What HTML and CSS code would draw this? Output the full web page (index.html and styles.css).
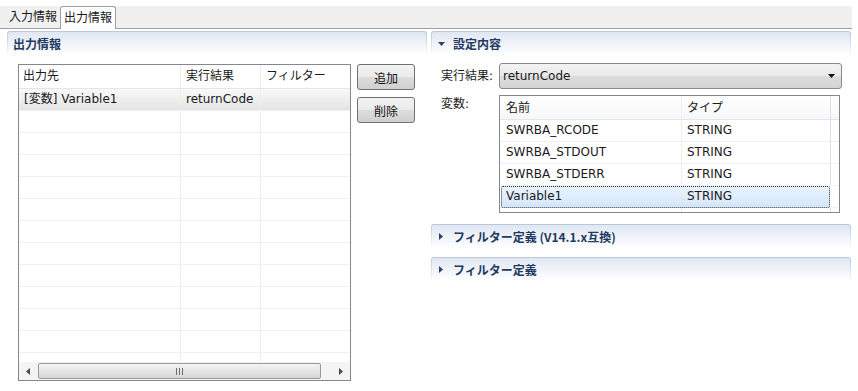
FILE: index.html
```html
<!DOCTYPE html>
<html lang="ja">
<head>
  <meta charset="UTF-8">
  <title>出力情報</title>
  <link rel="stylesheet" href="styles.css">
</head>
<body>

<div class="tabbar">
  <div class="tab">入力情報</div>
  <div class="tab active">出力情報</div>
</div>

<div class="main">
  <!-- 左: 出力情報 -->
  <div class="col">
    <div class="sec-head"><div class="sec-title">出力情報</div></div>
    <div class="left-body">
      <div class="grid">
        <div class="grid-head">
          <div class="cell">出力先</div>
          <div class="cell">実行結果</div>
          <div class="cell">フィルター</div>
        </div>
        <div class="grid-rows">
          <div class="grow sel">
            <div class="cell">[変数] Variable1</div>
            <div class="cell">returnCode</div>
            <div class="cell"></div>
          </div>
          <div class="grow"><div class="cell"></div><div class="cell"></div><div class="cell"></div></div>
          <div class="grow"><div class="cell"></div><div class="cell"></div><div class="cell"></div></div>
          <div class="grow"><div class="cell"></div><div class="cell"></div><div class="cell"></div></div>
          <div class="grow"><div class="cell"></div><div class="cell"></div><div class="cell"></div></div>
          <div class="grow"><div class="cell"></div><div class="cell"></div><div class="cell"></div></div>
          <div class="grow"><div class="cell"></div><div class="cell"></div><div class="cell"></div></div>
          <div class="grow"><div class="cell"></div><div class="cell"></div><div class="cell"></div></div>
          <div class="grow"><div class="cell"></div><div class="cell"></div><div class="cell"></div></div>
          <div class="grow"><div class="cell"></div><div class="cell"></div><div class="cell"></div></div>
          <div class="grow"><div class="cell"></div><div class="cell"></div><div class="cell"></div></div>
          <div class="grow"><div class="cell"></div><div class="cell"></div><div class="cell"></div></div>
          <div class="grow"><div class="cell"></div><div class="cell"></div><div class="cell"></div></div>
        </div>
        <div class="hscroll">
          <div class="sarrow">
            <svg width="4" height="7" viewBox="0 0 4 7"><path d="M4 0 L0 3.5 L4 7 Z" fill="#4a4a4a"/></svg>
          </div>
          <div class="thumb">
            <svg width="7" height="7" viewBox="0 0 7 7"><path d="M0.5 0 V7 M3.5 0 V7 M6.5 0 V7" stroke="#6a6a6a" stroke-width="1"/></svg>
          </div>
          <div class="strack"></div>
          <div class="sarrow">
            <svg width="4" height="7" viewBox="0 0 4 7"><path d="M0 0 L4 3.5 L0 7 Z" fill="#4a4a4a"/></svg>
          </div>
        </div>
      </div>
      <div class="btns">
        <button class="btn">追加</button>
        <button class="btn">削除</button>
      </div>
    </div>
  </div>

  <!-- 右: 設定内容 -->
  <div class="col">
    <div class="sec-head">
      <div class="sec-title">
        <svg class="tri" width="7" height="4" viewBox="0 0 7 4"><path d="M0 0 H7 L3.5 4 Z" fill="#2b4468"/></svg>
        設定内容
      </div>
    </div>
    <div class="form">
      <div class="frow">
        <div class="flabel">実行結果:</div>
        <div class="combo">
          <span>returnCode</span>
          <svg width="7" height="4" viewBox="0 0 7 4"><path d="M0 0 H7 L3.5 4 Z" fill="#111"/></svg>
        </div>
      </div>
      <div class="frow top">
        <div class="flabel lbl-var">変数:</div>
        <div class="vtable">
          <div class="vrow vhead">
            <div class="vcell">名前</div>
            <div class="vcell">タイプ</div>
            <div class="vcell"></div>
          </div>
          <div class="vrow">
            <div class="vcell">SWRBA_RCODE</div>
            <div class="vcell">STRING</div>
            <div class="vcell"></div>
          </div>
          <div class="vrow">
            <div class="vcell">SWRBA_STDOUT</div>
            <div class="vcell">STRING</div>
            <div class="vcell"></div>
          </div>
          <div class="vrow">
            <div class="vcell">SWRBA_STDERR</div>
            <div class="vcell">STRING</div>
            <div class="vcell"></div>
          </div>
          <div class="vrow vsel">
            <div class="vcell">Variable1</div>
            <div class="vcell">STRING</div>
            <div class="vcell"></div>
          </div>
          <div class="vrow">
            <div class="vcell"></div>
            <div class="vcell"></div>
            <div class="vcell"></div>
          </div>
        </div>
      </div>
    </div>

    <div class="sec-head closed first">
      <div class="sec-title">
        <svg class="tri" width="4" height="7" viewBox="0 0 4 7"><path d="M0 0 L4 3.5 L0 7 Z" fill="#2b4468"/></svg>
        フィルター定義 (V14.1.x互換)
      </div>
    </div>
    <div class="sec-head closed">
      <div class="sec-title">
        <svg class="tri" width="4" height="7" viewBox="0 0 4 7"><path d="M0 0 L4 3.5 L0 7 Z" fill="#2b4468"/></svg>
        フィルター定義
      </div>
    </div>
  </div>
</div>

</body>
</html>
```

FILE: styles.css
```css
body {
  margin: 0;
  background: #fff;
  font-family: "DejaVu Sans", "Noto Sans CJK JP", sans-serif;
  font-size: 12px;
  line-height: 16px;
  color: #1a1a1a;
  width: 858px;
  height: 391px;
  overflow: hidden;
}

/* タブ */
.tabbar {
  margin-top: 6px;
  width: 846px;
  height: 22px;
  padding-left: 6px;
  background: #f0f0f0;
  border-bottom: 1px solid #a0a0a0;
  display: flex;
  align-items: flex-end;
}

.tab {
  height: 22px;
  line-height: 22px;
  padding: 0 3px;
}

.tab.active {
  background: #fff;
  border: 1px solid #a0a0a0;
  border-bottom: none;
  border-radius: 3px 3px 0 0;
  height: 22px;
  margin-bottom: -1px;
  padding: 0 3px;
}

.main {
  display: flex;
  gap: 4px;
  padding: 2px 0 0 7px;
}

.col {
  width: 420px;
}

/* セクション見出し */
.sec-head {
  height: 24px;
  padding: 1px 1px 0;
  box-sizing: border-box;
  background: linear-gradient(#b8c7dc, #dfe6f0 60%, #fff);
  border-radius: 3px 3px 0 0;
}

.sec-title {
  height: 23px;
  line-height: 21px;
  padding-left: 5px;
  background: linear-gradient(#e0e7f2, #fff);
  border-radius: 2px 2px 0 0;
  font-family: "Noto Sans CJK JP", sans-serif;
  font-weight: bold;
  color: #1f3a63;
  display: flex;
  align-items: center;
}

.sec-title .tri {
  margin: 0 8px 0 1px;
}

.sec-head.closed .tri {
  margin: 0 10px 0 2px;
}

.sec-head.first {
  margin-top: 11px;
}

.sec-head.closed + .sec-head.closed {
  margin-top: 9px;
}

/* 左側 */
.left-body {
  display: flex;
  gap: 6px;
  padding: 9px 0 0 11px;
}

.grid {
  width: 331px;
  height: 315px;
  border: 1px solid #828790;
  display: flex;
  flex-direction: column;
}

.grid-head,
.grow {
  display: grid;
  grid-template-columns: 161px 80px 90px;
}

.grid-head {
  height: 23px;
  border-bottom: 1px solid #e3e5e8;
}

.grid-head .cell {
  line-height: 23px;
}

.cell {
  padding-left: 4px;
  white-space: nowrap;
  overflow: hidden;
}

.cell + .cell {
  border-left: 1px solid #eceef1;
  padding-left: 5px;
}

.grid-rows {
  height: 273px;
  overflow: hidden;
}

.grow {
  height: 21px;
  border-bottom: 1px solid #eef0f2;
}

.grow .cell {
  line-height: 20px;
}

.grow.sel {
  background: linear-gradient(#f9f9f9, #eeeeee 50%, #e4e4e4);
}

.grow.sel .cell {
  padding-left: 5px;
}

.hscroll {
  height: 18px;
  background: #f4f4f4;
  display: flex;
  align-items: center;
}

.sarrow {
  width: 18px;
  height: 18px;
  display: flex;
  align-items: center;
  justify-content: center;
}

.thumb {
  width: 281px;
  height: 14px;
  margin-left: 1px;
  border: 1px solid #9a9a9a;
  border-radius: 2px;
  background: linear-gradient(#f4f4f4, #e6e6e6 50%, #d6d6d6);
  display: flex;
  align-items: center;
  justify-content: center;
}

.strack {
  flex: 1;
}

.btns {
  display: flex;
  flex-direction: column;
  gap: 7px;
}

.btn {
  width: 58px;
  height: 26px;
  padding: 0;
  font-family: inherit;
  font-size: 12px;
  color: #111;
  border: 1px solid #707070;
  border-radius: 3px;
  background: linear-gradient(#f2f2f2, #ebebeb 50%, #dddddd 50%, #cfcfcf);
}

/* 右側 */
.form {
  padding: 8px 0 0 10px;
  display: flex;
  flex-direction: column;
  gap: 6px;
}

.frow {
  display: flex;
  align-items: center;
}

.frow.top {
  align-items: flex-start;
}

.flabel {
  width: 58px;
}

.lbl-var {
  padding-top: 1px;
}

.combo {
  width: 337px;
  height: 24px;
  padding: 0 2px;
  border: 1px solid #8a8a8a;
  border-radius: 3px;
  background: linear-gradient(#f3f3f3, #e9e9e9 50%, #dcdcdc 50%, #d4d4d4);
  display: flex;
  align-items: center;
  justify-content: space-between;
}

.combo span {
  padding-left: 1px;
}

.combo svg {
  margin-right: 4px;
}

.vtable {
  width: 339px;
  height: 116px;
  border: 1px solid #828790;
  overflow: hidden;
}

.vrow {
  display: grid;
  grid-template-columns: 181px 149px 9px;
  height: 21px;
  border-bottom: 1px solid #eef0f2;
}

.vrow.vhead {
  height: 23px;
  background: linear-gradient(#fff, #f6f7f8);
  border-bottom: 1px solid #e3e5e8;
}

.vcell {
  padding-left: 6px;
  line-height: 21px;
  white-space: nowrap;
}

.vhead .vcell {
  line-height: 25px;
}

.vcell + .vcell {
  border-left: 1px solid #eceef1;
  padding-left: 5px;
}

.vcell:last-child {
  border-left: 1px solid #dcdfe3;
  padding: 0;
}

.vrow.vsel {
  position: relative;
}

.vrow.vsel::before {
  content: "";
  position: absolute;
  left: 1px;
  top: 0;
  width: 327px;
  height: 20px;
  border: 1px dotted #333;
  border-radius: 2px;
  background: linear-gradient(#eaf3fd, #d3e6fb);
}

.vrow.vsel .vcell {
  position: relative;
  border-left-color: transparent;
}

.vrow.vsel .vcell:first-child {
  border-left: none;
}
```
